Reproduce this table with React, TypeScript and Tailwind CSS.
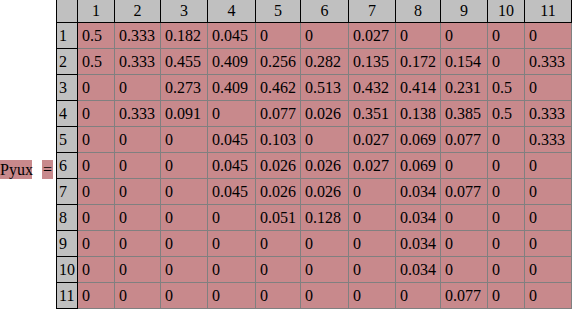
import React from "react";

const cols = ["1", "2", "3", "4", "5", "6", "7", "8", "9", "10", "11"];

const rows: string[][] = [
  ["0.5", "0.333", "0.182", "0.045", "0", "0", "0.027", "0", "0", "0", "0"],
  ["0.5", "0.333", "0.455", "0.409", "0.256", "0.282", "0.135", "0.172", "0.154", "0", "0.333"],
  ["0", "0", "0.273", "0.409", "0.462", "0.513", "0.432", "0.414", "0.231", "0.5", "0"],
  ["0", "0.333", "0.091", "0", "0.077", "0.026", "0.351", "0.138", "0.385", "0.5", "0.333"],
  ["0", "0", "0", "0.045", "0.103", "0", "0.027", "0.069", "0.077", "0", "0.333"],
  ["0", "0", "0", "0.045", "0.026", "0.026", "0.027", "0.069", "0", "0", "0"],
  ["0", "0", "0", "0.045", "0.026", "0.026", "0", "0.034", "0.077", "0", "0"],
  ["0", "0", "0", "0", "0.051", "0.128", "0", "0.034", "0", "0", "0"],
  ["0", "0", "0", "0", "0", "0", "0", "0.034", "0", "0", "0"],
  ["0", "0", "0", "0", "0", "0", "0", "0.034", "0", "0", "0"],
  ["0", "0", "0", "0", "0", "0", "0", "0", "0.077", "0", "0"],
];

const App = () => {
  return (
    <div className="w-[588px] h-[309px] overflow-hidden bg-white flex font-['Liberation_Serif',serif] text-[16px] leading-none text-black">
      <div className="flex items-start pt-[160px]">
        <span className="w-[32px] h-[19px] flex items-center bg-[#c8898c]">Pyux</span>
        <span className="ml-[10px] w-[11px] h-[19px] flex items-center justify-center bg-[#c8898c]">=</span>
      </div>
      <div className="ml-[3px] grid grid-cols-[21px_37px_46px_47px_48px_45px_48px_47px_45px_47px_37px_47px] grid-rows-[23px_repeat(11,26px)] border-l border-black">
        <div className="bg-[#c0c0c0] border-r border-b border-black" />
        {cols.map((c) => (
          <div
            key={c}
            className="bg-[#c0c0c0] border-r border-b border-black flex items-center justify-center"
          >
            {c}
          </div>
        ))}
        {rows.map((r, i) => (
          <React.Fragment key={i}>
            <div className="bg-[#c0c0c0] border-r border-b border-black flex items-center pl-[2px]">
              {i + 1}
            </div>
            {r.map((v, j) => (
              <div
                key={j}
                className="bg-[#c8898c] border-r border-b border-[#808080] flex items-center pl-[4px]"
              >
                {v}
              </div>
            ))}
          </React.Fragment>
        ))}
      </div>
    </div>
  );
};

export default App;
